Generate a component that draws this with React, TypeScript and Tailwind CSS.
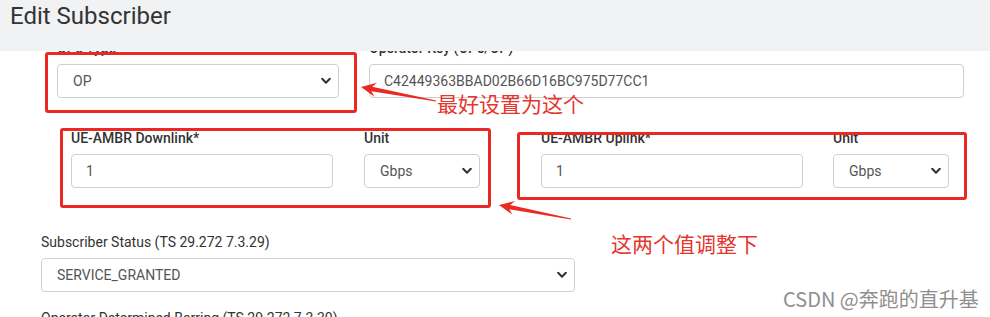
import React from "react";

// small chevron used by the selects
const Chevron = () => (
  <svg
    className="pointer-events-none absolute right-[8px] top-1/2 -translate-y-1/2"
    width="10"
    height="7"
    viewBox="0 0 10 7"
  >
    <path d="M1.2 1.3 L5 5.2 L8.8 1.3" fill="none" stroke="#333" strokeWidth="2" strokeLinecap="round" strokeLinejoin="round" />
  </svg>
);

const Select = ({ value, className }: { value: string; className: string }) => (
  <div className={`relative ${className}`}>
    <select
      defaultValue={value}
      className="h-[34px] w-full appearance-none rounded-[4px] border border-[#cfcfcf] bg-white pl-[15px] text-[14px] text-[#555] outline-none"
    >
      <option>{value}</option>
    </select>
    <Chevron />
  </div>
);

const Input = ({ value, className }: { value: string; className: string }) => (
  <input
    defaultValue={value}
    className={`h-[34px] rounded-[4px] border border-[#cfcfcf] bg-white pl-[14px] text-[14px] text-[#555] outline-none ${className}`}
  />
);

const Label = ({ children, bold }: { children: React.ReactNode; bold?: boolean }) => (
  <div className={`mb-[8px] h-[16px] text-[14px] leading-[16px] text-[#333] ${bold ? "font-medium" : ""}`}>{children}</div>
);

// arrow drawn from tail to tip, tapered shaft + triangular head
const arrowPoints = (x1: number, y1: number, x2: number, y2: number) => {
  const len = Math.hypot(x2 - x1, y2 - y1);
  const dx = (x2 - x1) / len;
  const dy = (y2 - y1) / len;
  const nx = -dy;
  const ny = dx;
  const bx = x2 - dx * 15;
  const by = y2 - dy * 15;
  const sx = x2 - dx * 11;
  const sy = y2 - dy * 11;
  const pts = [
    [x1 + nx * 0.4, y1 + ny * 0.4],
    [sx + nx * 2.2, sy + ny * 2.2],
    [bx + nx * 7, by + ny * 7],
    [x2, y2],
    [bx - nx * 7, by - ny * 7],
    [sx - nx * 2.2, sy - ny * 2.2],
    [x1 - nx * 0.4, y1 - ny * 0.4],
  ];
  return pts.map((p) => p.join(",")).join(" ");
};

export default function App() {
  return (
    <div className="relative h-[317px] w-[990px] overflow-hidden bg-white font-['Roboto',sans-serif]">
      <div className="relative z-10 h-[51px] bg-[#f1f2f4] pl-[10px] pt-[2px] text-[24px] leading-[28px] text-[#333]">
        Edit Subscriber
      </div>

      {/* Form body */}
      <div className="-mt-[11px]">
        <div className="flex">
          <div className="ml-[57px] w-[282px]">
            <Label bold>OPc Type</Label>
            <Select value="OP" className="w-[282px]" />
          </div>
          <div className="ml-[30px] w-[595px]">
            <Label bold>Operator Key (OPc/OP)</Label>
            <Input value="C42449363BBAD02B66D16BC975D77CC1" className="w-full" />
          </div>
        </div>

        <div className="mt-[32px] flex">
          <div className="ml-[71px] w-[262px]">
            <Label bold>UE-AMBR Downlink*</Label>
            <Input value="1" className="w-full" />
          </div>
          <div className="ml-[31px] w-[116px]">
            <Label bold>Unit</Label>
            <Select value="Gbps" className="w-full" />
          </div>
          <div className="ml-[61px] w-[262px]">
            <Label bold>UE-AMBR Uplink*</Label>
            <Input value="1" className="w-full" />
          </div>
          <div className="ml-[30px] w-[116px]">
            <Label bold>Unit</Label>
            <Select value="Gbps" className="w-full" />
          </div>
        </div>

        <div className="ml-[41px] mt-[46px] w-[534px]">
          <Label>Subscriber Status (TS 29.272 7.3.29)</Label>
          <Select value="SERVICE_GRANTED" className="w-full" />
        </div>

        <div className="ml-[41px] mt-[18px]">
          <Label>Operator Determined Barring (TS 29.272 7.3.30)</Label>
        </div>
      </div>

      {/* Red annotations over the screenshot */}
      <div className="absolute left-[45px] top-[52px] z-20 h-[61px] w-[312px] rounded-[3px] border-[3px] border-[#ea2a22]" />
      <div className="absolute left-[60px] top-[128px] z-20 h-[80px] w-[431px] rounded-[3px] border-[3px] border-[#ea2a22]" />
      <div className="absolute left-[517px] top-[132px] z-20 h-[68px] w-[450px] rounded-[3px] border-[3px] border-[#ea2a22]" />

      <svg className="pointer-events-none absolute left-0 top-0 z-20" width="990" height="317">
        <polygon points={arrowPoints(436, 101, 361, 87)} fill="#ea2a22" />
        <polygon points={arrowPoints(571, 219, 499, 205)} fill="#ea2a22" />
      </svg>

      <div className="absolute left-[437px] top-[90px] z-20 font-['Noto_Sans_CJK_SC',sans-serif] text-[21px] leading-[26px] text-[#e5352c]">
        最好设置为这个
      </div>
      <div className="absolute left-[611px] top-[230px] z-20 font-['Noto_Sans_CJK_SC',sans-serif] text-[21px] leading-[26px] text-[#e5352c]">
        这两个值调整下
      </div>
      <div className="absolute left-[783px] top-[286px] z-20 font-['Noto_Sans_CJK_SC',sans-serif] text-[20px] leading-[26px] text-[#8f8f8f]">
        CSDN @奔跑的直升基
      </div>
    </div>
  );
}
